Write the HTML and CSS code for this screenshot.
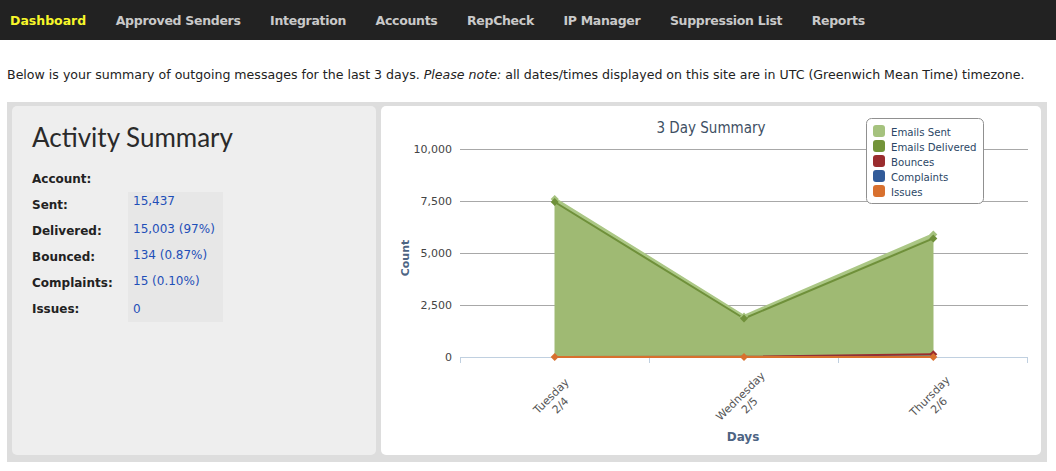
FILE: index.html
```html
<!DOCTYPE html>
<html lang="en">
<head>
<meta charset="utf-8">
<title>Dashboard</title>
<link rel="stylesheet" href="styles.css">
</head>
<body>
<nav class="topnav">
  <a class="nav-item active" href="#">Dashboard</a>
  <a class="nav-item" href="#">Approved Senders</a>
  <a class="nav-item" href="#">Integration</a>
  <a class="nav-item" href="#">Accounts</a>
  <a class="nav-item" href="#">RepCheck</a>
  <a class="nav-item" href="#">IP Manager</a>
  <a class="nav-item" href="#">Suppression List</a>
  <a class="nav-item" href="#">Reports</a>
</nav>
<main class="content">
  <p class="intro">Below is your summary of outgoing messages for the last 3 days. <em>Please note:</em> all dates/times displayed on this site are in UTC (Greenwich Mean Time) timezone.</p>
  <div class="dash">
    <section class="summary">
      <h1 class="summary-title">Activity Summary</h1>
      <div class="stats">
        <div class="stat-label">Account:</div><div class="stat-value empty"></div>
        <div class="stat-label">Sent:</div><div class="stat-value first">15,437</div>
        <div class="stat-label">Delivered:</div><div class="stat-value">15,003 (97%)</div>
        <div class="stat-label">Bounced:</div><div class="stat-value">134 (0.87%)</div>
        <div class="stat-label">Complaints:</div><div class="stat-value">15 (0.10%)</div>
        <div class="stat-label">Issues:</div><div class="stat-value last">0</div>
      </div>
    </section>
    <section class="chart-panel">
      <svg class="chart" width="660" height="349" viewBox="0 0 660 349">
        <text class="chart-title" x="330" y="27" text-anchor="middle">3 Day Summary</text>
        <g class="grid">
          <line x1="79" y1="43.5" x2="647" y2="43.5"/>
          <line x1="79" y1="95.5" x2="647" y2="95.5"/>
          <line x1="79" y1="147.5" x2="647" y2="147.5"/>
          <line x1="79" y1="199.5" x2="647" y2="199.5"/>
        </g>
        <g class="ylabels" text-anchor="end">
          <text x="71" y="47">10,000</text>
          <text x="71" y="99">7,500</text>
          <text x="71" y="151">5,000</text>
          <text x="71" y="203">2,500</text>
          <text x="71" y="255">0</text>
        </g>
        <text class="axis-title" transform="translate(28 152) rotate(-90)" text-anchor="middle">Count</text>
        <polygon class="area-sent" points="173.7,92.9 363,210.4 552.3,128.6 552.3,251 173.7,251"/>
        <polygon class="area-delivered" points="173.7,96 363,212.5 552.3,132.4 552.3,251 173.7,251"/>
        <g class="xaxis">
          <line x1="79" y1="251.5" x2="647" y2="251.5"/>
          <line x1="79.5" y1="251" x2="79.5" y2="257"/>
          <line x1="268.5" y1="251" x2="268.5" y2="257"/>
          <line x1="457.5" y1="251" x2="457.5" y2="257"/>
          <line x1="646.5" y1="251" x2="646.5" y2="257"/>
        </g>
        <polyline class="line-sent" points="173.7,92.9 363,210.4 552.3,128.6"/>
        <polyline class="line-delivered" points="173.7,96 363,212.5 552.3,132.4"/>
        <polyline class="line-bounces" points="173.7,250.9 363,250.8 552.3,248.3"/>
        <polyline class="line-complaints" points="173.7,251 363,251 552.3,250.7"/>
        <polyline class="line-issues" points="173.7,251 363,251 552.3,251"/>
        <g class="mk-sent">
          <path d="M173.7 88.9 l4 4 l-4 4 l-4 -4z"/>
          <path d="M363 206.4 l4 4 l-4 4 l-4 -4z"/>
          <path d="M552.3 124.6 l4 4 l-4 4 l-4 -4z"/>
        </g>
        <g class="mk-delivered">
          <path d="M173.7 92 l4 4 l-4 4 l-4 -4z"/>
          <path d="M363 208.5 l4 4 l-4 4 l-4 -4z"/>
          <path d="M552.3 128.4 l4 4 l-4 4 l-4 -4z"/>
        </g>
        <g class="mk-bounces">
          <path d="M552.3 244.3 l4 4 l-4 4 l-4 -4z"/>
        </g>
        <g class="mk-issues">
          <path d="M173.7 247 l4 4 l-4 4 l-4 -4z"/>
          <path d="M363 247 l4 4 l-4 4 l-4 -4z"/>
          <path d="M552.3 247 l4 4 l-4 4 l-4 -4z"/>
        </g>
        <g class="xlabels" text-anchor="middle">
          <text transform="translate(172.8 292.8) rotate(-45)"><tspan x="0" y="0">Tuesday</tspan><tspan x="0" y="13">2/4</tspan></text>
          <text transform="translate(362.1 292.8) rotate(-45)"><tspan x="0" y="0">Wednesday</tspan><tspan x="0" y="13">2/5</tspan></text>
          <text transform="translate(551.4 292.8) rotate(-45)"><tspan x="0" y="0">Thursday</tspan><tspan x="0" y="13">2/6</tspan></text>
        </g>
        <text class="axis-title days" x="362" y="335" text-anchor="middle">Days</text>
        <g class="legend">
          <rect class="legend-box" x="485.5" y="12.5" width="117" height="85" rx="5" ry="5"/>
          <rect x="492" y="19" width="12" height="12" rx="3" fill="#a5c27e"/>
          <text x="510" y="29.5">Emails Sent</text>
          <rect x="492" y="34" width="12" height="12" rx="3" fill="#739439"/>
          <text x="510" y="44.5">Emails Delivered</text>
          <rect x="492" y="49" width="12" height="12" rx="3" fill="#9a2c2e"/>
          <text x="510" y="59.5">Bounces</text>
          <rect x="492" y="64" width="12" height="12" rx="3" fill="#315b99"/>
          <text x="510" y="74.5">Complaints</text>
          <rect x="492" y="79" width="12" height="12" rx="3" fill="#d8702e"/>
          <text x="510" y="89.5">Issues</text>
        </g>
      </svg>
    </section>
  </div>
</main>
</body>
</html>
```
FILE: styles.css
```css
html, body {
  margin: 0;
  padding: 0;
  background: #ffffff;
}

body {
  font-family: "DejaVu Sans", Verdana, sans-serif;
  color: #222222;
}

.topnav {
  display: flex;
  align-items: center;
  gap: 29.5px;
  height: 40px;
  padding-left: 10px;
  background: #222222;
}

.nav-item {
  font-size: 12.5px;
  font-weight: bold;
  letter-spacing: -0.3px;
  color: #c9c9c9;
  text-decoration: none;
}

.nav-item.active {
  letter-spacing: 0;
  color: #f7f72a;
}

.content {
  padding: 0 9px 0 7px;
}

.intro {
  margin: 0;
  padding-top: 26px;
  height: 36px;
  font-size: 12.58px;
  line-height: 18px;
  white-space: nowrap;
}

.dash {
  display: flex;
  gap: 5px;
  height: 360px;
  box-sizing: border-box;
  padding: 4px 6px 7px 5px;
  background: #dddddd;
}

.summary {
  width: 364px;
  flex: none;
  box-sizing: border-box;
  padding: 15px 20px 0 20px;
  background: #eeeeee;
  border-radius: 5px;
}

.summary-title {
  margin: 0 0 13px 0;
  font-family: Lato, "Open Sans", sans-serif;
  font-weight: 400;
  font-size: 26px;
  line-height: 32px;
  color: #2a2a2a;
}

.stats {
  display: grid;
  grid-template-columns: 96px 95px;
  grid-auto-rows: 26px;
}

.stat-label {
  display: flex;
  align-items: center;
  font-size: 12px;
  font-weight: bold;
  color: #222222;
}

.stat-value {
  display: flex;
  align-items: center;
  padding: 0 0 4px 5px;
  font-size: 12px;
  color: #1f4fb8;
  background: #e7e7e7;
}

.stat-value.empty {
  background: transparent;
}

.stat-value.first {
  padding-bottom: 8px;
}

.stat-value.last {
  padding-bottom: 0;
}

.chart-panel {
  width: 660px;
  flex: none;
  background: #ffffff;
  border-radius: 5px;
  overflow: hidden;
}

.chart {
  display: block;
  font-family: "DejaVu Sans", Verdana, sans-serif;
}

.chart-title {
  font-size: 15px;
  font-stretch: condensed;
  fill: #3e4f63;
}

.grid line {
  stroke: #a8a8a8;
  stroke-width: 1;
}

.ylabels text {
  font-size: 11px;
  fill: #444444;
}

.axis-title {
  font-size: 11px;
  font-weight: bold;
  fill: #4d6483;
}

.axis-title.days {
  font-size: 12px;
}

.xaxis line {
  stroke: #c0d0e0;
  stroke-width: 1;
}

.area-sent {
  fill: #a6c07e;
}

.area-delivered {
  fill: #9fba73;
}

.line-sent {
  fill: none;
  stroke: #abc785;
  stroke-width: 3;
  stroke-linejoin: round;
}

.line-delivered {
  fill: none;
  stroke: #6f903a;
  stroke-width: 2;
  stroke-linejoin: round;
}

.line-bounces {
  fill: none;
  stroke: #9a2c2e;
  stroke-width: 2;
}

.line-complaints {
  fill: none;
  stroke: #315b99;
  stroke-width: 2;
}

.line-issues {
  fill: none;
  stroke: #d8702e;
  stroke-width: 2;
}

.mk-sent path { fill: #a5c27e; }
.mk-delivered path { fill: #6f903a; }
.mk-bounces path { fill: #9a2c2e; }
.mk-issues path { fill: #d8702e; }

.xlabels text {
  font-size: 11px;
  fill: #555555;
}

.legend text {
  font-size: 11.3px;
  font-stretch: condensed;
  fill: #2c4766;
}

.legend-box {
  fill: #ffffff;
  stroke: #909090;
  stroke-width: 1;
}
```
